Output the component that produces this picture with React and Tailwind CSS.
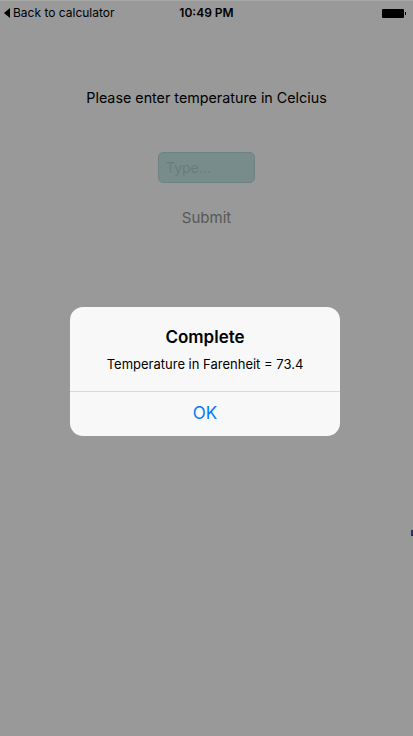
import React from "react"

const font = { fontFamily: "Inter, 'Noto Sans', sans-serif" }

const StatusBar = () => (
  <div className="relative flex items-center h-[25px] px-[4px] text-[12px] text-black border-t border-[#a8a8a8]">
    <div className="flex items-center gap-[3px]">
      <svg width="6" height="10" viewBox="0 0 6 10">
        <path d="M6 0 L0 5 L6 10 Z" fill="#000" />
      </svg>
      <span>Back to calculator</span>
    </div>
    <span className="absolute left-1/2 -translate-x-1/2 font-semibold">10:49 PM</span>
    <div className="ml-auto mr-[3px] flex items-center">
      <div className="w-[22px] h-[9px] bg-black rounded-[1px]" />
      <div className="ml-[1px] w-[1.5px] h-[3px] bg-black" />
    </div>
  </div>
)

export default function App() {
  return (
    <div className="relative w-[413px] h-[736px] bg-[#999999] overflow-hidden" style={font}>
      <StatusBar />
      <div className="flex flex-col items-center">
        <p className="mt-[62px] text-[14.3px] text-black">Please enter temperature in Celcius</p>
        <div className="mt-[44px] w-[97px] h-[31px] rounded-[5px] bg-[#788d8b] border border-[#6f8482] flex items-center px-[7px]">
          <span className="text-[14px] text-[#6a7c7a]">Type...</span>
        </div>
        <p className="mt-[24px] text-[15px] text-[#575757]">Submit</p>
      </div>

      <div className="absolute left-[70px] top-[307px] w-[270px] rounded-[13px] bg-[#f8f8f8] overflow-hidden">
        <div className="flex flex-col items-center pt-[19px] pb-[18px]">
          <p className="text-[17px] font-semibold text-black leading-[22px]">Complete</p>
          <p className="mt-[8px] text-[13px] text-black leading-[17px]">Temperature in Farenheit = 73.4</p>
        </div>
        <div className="h-px bg-[#d9d9d9]" />
        <div className="h-[44px] flex items-center justify-center text-[17px] text-[#007aff]">OK</div>
      </div>

      <div className="absolute right-0 top-[530px] w-[2px] h-[6px] bg-[#2a2f5a]" />
    </div>
  )
}
